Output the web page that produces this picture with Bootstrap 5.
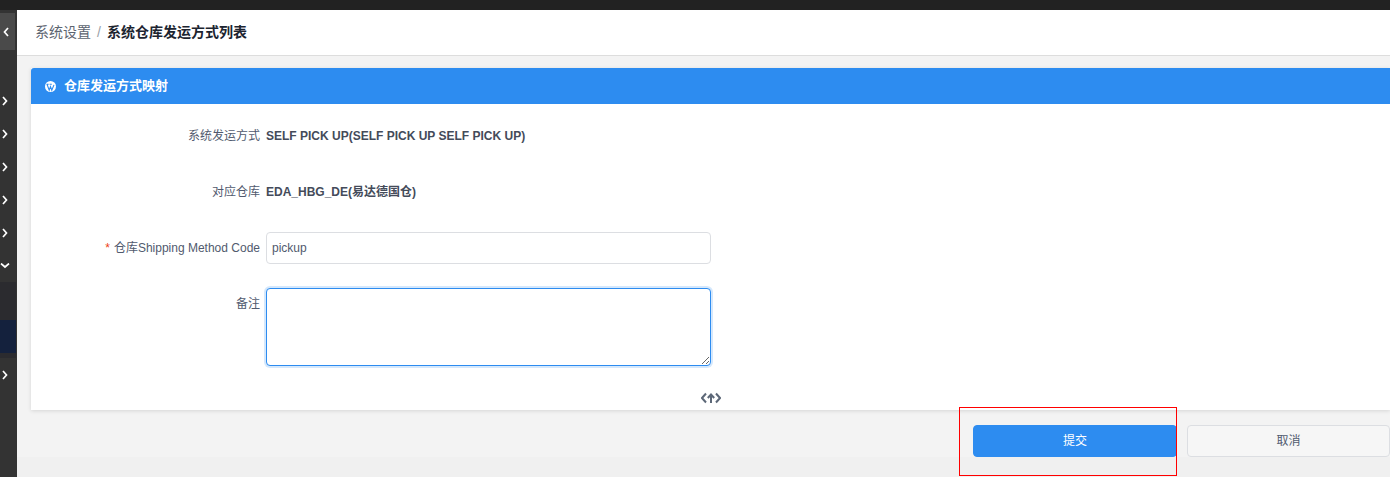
<!DOCTYPE html>
<html lang="zh-CN">
<head>
    <meta charset="UTF-8">
    <title>系统仓库发运方式列表</title>
    <link href="https://cdn.jsdelivr.net/npm/bootstrap@5.3.3/dist/css/bootstrap.min.css" rel="stylesheet">
    <style>
        html, body { height: 100%; overflow: hidden; }
        body {
            font-family: "Liberation Sans", "Noto Sans CJK SC", sans-serif;
            font-size: 12px;
            color: #515a6e;
            background: #f0f0f0;
        }
        .top-strip { height: 10px; background: #222; }
        .page-wrap { height: 467px; }
        .side-rail { width: 17px; background: #333; flex: none; }
        .rail-toggle { width: 15px; height: 37px; margin-top: 3px; padding-left: 3px; background: #4a4a4a; }
        .rail-item { height: 33px; width: 10px; }
        .rail-list { margin-top: 34px; }
        .rail-sub { width: 16px; height: 76px; background: #2b2b2f; padding-top: 38px; }
        .rail-sub-active { height: 33px; background: #14213d; }
        .main-area { min-width: 0; background: #f3f3f3; position: relative; }
        .crumb-bar {
            height: 46px;
            background: #fff;
            border-bottom: 1px solid #ddd;
            padding-left: 18px;
            font-size: 14px;
        }
        .crumb-root { color: #5c6470; }
        .crumb-sep { color: #9a9fa8; width: 16px; text-align: center; }
        .crumb-now { color: #1c2430; font-weight: 700; }
        .map-panel {
            margin: 12px 0 0 14px;
            height: 342px;
            background: #fff;
            box-shadow: 0 1px 4px rgba(0, 0, 0, .12);
        }
        .map-head {
            height: 36px;
            background: #2d8cf0;
            color: #fff;
            font-size: 13px;
            font-weight: 700;
            padding-left: 14px;
            gap: 8px;
            border-radius: 3px 0 0 0;
        }
        .map-body { padding-top: 16px; }
        .field-line { margin-bottom: 24px; }
        .field-text { min-height: 32px; }
        .field-label { width: 229px; flex: none; text-align: right; color: #515a6e; }
        .field-value { margin-left: 6px; font-weight: 700; color: #444b5a; }
        .req-star { color: #ed4014; margin-right: 4px; }
        .map-input {
            width: 445px;
            margin-left: 6px;
            height: 32px;
            font-size: 12px;
            color: #515a6e;
            border: 1px solid #dcdee2;
            border-radius: 4px;
            padding: 4px 5px;
            box-shadow: none;
        }
        .map-textarea {
            height: 78px;
            border-color: #2d8cf0;
            box-shadow: 0 0 0 2px rgba(45, 140, 240, .2);
        }
        .label-top { padding-top: 7px; }
        .code-mark { width: 690px; margin-top: 26px; }
        .action-row { padding: 15px 0 0 956px; height: 47px; }
        .act-btn { height: 32px; font-size: 12px; border-radius: 4px; padding: 0; flex: none; }
        .act-ok { width: 204px; background: #2d8cf0; border: 1px solid #2d8cf0; color: #fff; }
        .act-cancel { width: 203px; margin-left: 10px; background: #f6f6f6; border: 1px solid #dcdee2; color: #515a6e; }
        .foot-band { height: 20px; background: #f0f0f0; }
        .note-box {
            position: absolute;
            left: 942px;
            top: 397px;
            width: 218px;
            height: 69px;
            border: 1px solid #f00;
            pointer-events: none;
        }
    </style>
</head>
<body>
    <div class="top-strip"></div>
    <div class="page-wrap d-flex">
        <div class="side-rail">
            <div class="rail-toggle d-flex align-items-center">
                <svg width="6" height="10" viewBox="0 0 6 10"><path d="M5 1 1.500 5 5 9" fill="none" stroke="#fff" stroke-width="1.7"/></svg>
            </div>
            <div class="rail-list">
                <div class="rail-item d-flex align-items-center justify-content-center"><svg width="6" height="10" viewBox="0 0 6 10"><path d="M1 1 4.500 5 1 9" fill="none" stroke="#fff" stroke-width="1.7"/></svg></div>
                <div class="rail-item d-flex align-items-center justify-content-center"><svg width="6" height="10" viewBox="0 0 6 10"><path d="M1 1 4.500 5 1 9" fill="none" stroke="#fff" stroke-width="1.7"/></svg></div>
                <div class="rail-item d-flex align-items-center justify-content-center"><svg width="6" height="10" viewBox="0 0 6 10"><path d="M1 1 4.500 5 1 9" fill="none" stroke="#fff" stroke-width="1.7"/></svg></div>
                <div class="rail-item d-flex align-items-center justify-content-center"><svg width="6" height="10" viewBox="0 0 6 10"><path d="M1 1 4.500 5 1 9" fill="none" stroke="#fff" stroke-width="1.7"/></svg></div>
                <div class="rail-item d-flex align-items-center justify-content-center"><svg width="6" height="10" viewBox="0 0 6 10"><path d="M1 1 4.500 5 1 9" fill="none" stroke="#fff" stroke-width="1.7"/></svg></div>
                <div class="rail-item d-flex align-items-center justify-content-center"><svg width="10" height="6" viewBox="0 0 10 6"><path d="M1 .5 5 4 9 .5" fill="none" stroke="#fff" stroke-width="1.7"/></svg></div>
                <div class="rail-sub"><div class="rail-sub-active"></div></div>
                <div class="rail-item d-flex align-items-center justify-content-center"><svg width="6" height="10" viewBox="0 0 6 10"><path d="M1 1 4.500 5 1 9" fill="none" stroke="#fff" stroke-width="1.7"/></svg></div>
            </div>
        </div>
        <div class="main-area flex-grow-1">
            <div class="crumb-bar d-flex align-items-center">
                <span class="crumb-root">系统设置</span><span class="crumb-sep">/</span><span class="crumb-now">系统仓库发运方式列表</span>
            </div>
            <div class="map-panel">
                <div class="map-head d-flex align-items-center">
                    <svg width="11" height="11" viewBox="0 0 12 12"><circle cx="6" cy="6" r="6" fill="#fff"/><path d="M2.200 3.600 4.600 10 6 6.200 7.400 10 9.800 4.200M1.600 3.600H4M5 3.600H7.400" fill="none" stroke="#2d8cf0" stroke-width="1.200"/></svg>
                    <span>仓库发运方式映射</span>
                </div>
                <div class="map-body">
                    <div class="field-line field-text d-flex align-items-center">
                        <div class="field-label">系统发运方式</div>
                        <div class="field-value">SELF PICK UP(SELF PICK UP SELF PICK UP)</div>
                    </div>
                    <div class="field-line field-text d-flex align-items-center">
                        <div class="field-label">对应仓库</div>
                        <div class="field-value">EDA_HBG_DE(易达德国仓)</div>
                    </div>
                    <div class="field-line d-flex align-items-center">
                        <div class="field-label"><span class="req-star">*</span>仓库Shipping Method Code</div>
                        <input class="form-control map-input" type="text" value="pickup">
                    </div>
                    <div class="field-line d-flex align-items-start mb-0">
                        <div class="field-label label-top">备注</div>
                        <textarea class="form-control map-input map-textarea"></textarea>
                    </div>
                    <div class="code-mark d-flex justify-content-end">
                        <svg width="20" height="12" viewBox="0 0 20 12"><path d="M5 1.500 1 6l4 4.500M15 1.500l4 4.500-4 4.500" fill="none" stroke="#5d6878" stroke-width="2"/><path d="M10 11V3M6.800 6 10 2.500 13.200 6" fill="none" stroke="#5d6878" stroke-width="2"/></svg>
                    </div>
                </div>
            </div>
            <div class="action-row d-flex">
                <button class="btn act-btn act-ok" type="button">提交</button>
                <button class="btn act-btn act-cancel" type="button">取消</button>
            </div>
            <div class="foot-band"></div>
            <div class="note-box"></div>
        </div>
    </div>
    <script src="https://cdn.jsdelivr.net/npm/bootstrap@5.3.3/dist/js/bootstrap.bundle.min.js"></script>
</body>
</html>
